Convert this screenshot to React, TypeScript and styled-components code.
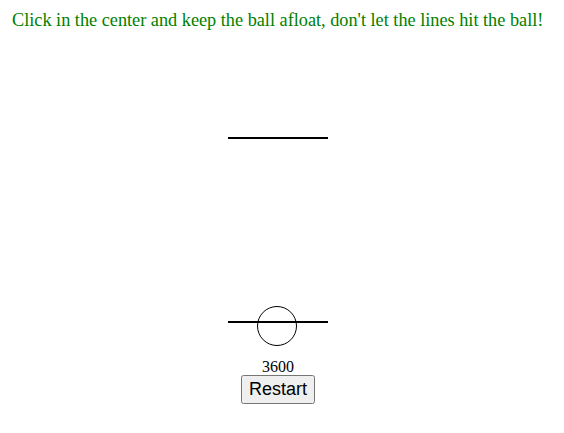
import styled, { createGlobalStyle } from "styled-components";

const GlobalStyle = createGlobalStyle`
  body {
    margin: 0;
    background: #fff;
  }
`;

const Page = styled.div`
  padding: 10px 0 0 12px;
  font-family: "Liberation Serif", serif;
`;

const Instructions = styled.p`
  margin: 0;
  color: green;
  font-size: 18.25px;
  white-space: nowrap;
`;

const Game = styled.div`
  width: 532px;
  display: flex;
  flex-direction: column;
  align-items: center;
`;

// the play field: line and ball positions are the game state itself
const Stage = styled.div`
  position: relative;
  width: 100px;
  height: 327px;
`;

const Line = styled.div<{ $top: number }>`
  position: absolute;
  left: 0;
  top: ${(p) => p.$top}px;
  width: 100px;
  height: 2px;
  background: #000;
`;

const Ball = styled.div<{ $top: number }>`
  position: absolute;
  left: 29px;
  top: ${(p) => p.$top}px;
  width: 38px;
  height: 38px;
  border: 1px solid #000;
  border-radius: 50%;
`;

const Score = styled.div`
  font-size: 16px;
  line-height: 17px;
  color: #000;
`;

const RestartButton = styled.button`
  font-family: "Liberation Sans", Arial, sans-serif;
  font-size: 18px;
  padding: 2px 6px;
`;

export default function App() {
  return (
    <Page>
      <GlobalStyle />
      <Instructions>Click in the center and keep the ball afloat, don't let the lines hit the ball!</Instructions>
      <Game>
        <Stage>
          <Line $top={106} />
          <Line $top={290} />
          <Ball $top={275} />
        </Stage>
        <Score>3600</Score>
        <RestartButton>Restart</RestartButton>
      </Game>
    </Page>
  );
}
